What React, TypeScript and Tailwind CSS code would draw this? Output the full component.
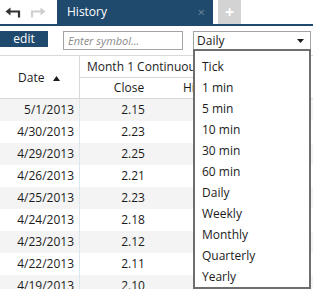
import React from "react";

const rows = [
    { date: "5/1/2013", close: "2.15" },
    { date: "4/30/2013", close: "2.23" },
    { date: "4/29/2013", close: "2.25" },
    { date: "4/26/2013", close: "2.21" },
    { date: "4/25/2013", close: "2.23" },
    { date: "4/24/2013", close: "2.18" },
    { date: "4/23/2013", close: "2.12" },
    { date: "4/22/2013", close: "2.11" },
    { date: "4/19/2013", close: "2.10" },
];

const intervals = [
    "Tick",
    "1 min",
    "5 min",
    "10 min",
    "30 min",
    "60 min",
    "Daily",
    "Weekly",
    "Monthly",
    "Quarterly",
    "Yearly",
];

const NavArrow = ({ flip, color }: { flip?: boolean; color: string }) => (
    <svg
        width="16"
        height="12"
        viewBox="0 0 16 12"
        className={flip ? "-scale-x-100" : ""}
    >
        <path
            d="M14 10.5 V4.5 H3"
            fill="none"
            stroke={color}
            strokeWidth="2.2"
        />
        <path d="M0.5 4.5 L5.5 0.5 V8.5 Z" fill={color} />
    </svg>
);

const App: React.FC = () => {
    return (
        <div
            className="relative w-[313px] h-[289px] overflow-hidden bg-white text-[12px] text-[#1b1b1b]"
            style={{ fontFamily: '"Open Sans", "Noto Sans", sans-serif' }}
        >
            {/* Tab strip */}
            <div className="flex h-[24px]">
                <div className="w-[57px] flex items-center gap-[9px] pl-[5px] pt-[1px]">
                    <NavArrow color="#333333" />
                    <NavArrow flip color="#cfcfcf" />
                </div>
                <div className="w-[156px] bg-[#1f4a6e] flex items-center justify-between pl-[10px] pr-[8px] text-white">
                    <span>History</span>
                    <span className="text-[#6f8599] text-[13px] leading-none">×</span>
                </div>
                <div className="ml-[5px] w-[23px] bg-[#d3d3d3] flex items-center justify-center text-white font-bold text-[16px] leading-none">
                    +
                </div>
            </div>
            <div className="h-[2px] bg-[#1f4a6e]" />

            {/* Toolbar */}
            <div className="flex items-start h-[29px] pt-[5px]">
                <button className="w-[48px] h-[16px] bg-[#1f4a6e] text-white leading-[16px] text-center">
                    edit
                </button>
                <div className="ml-[15px] w-[120px] h-[19px] border border-[#a3a3a3] pl-[4px] italic text-[#8a8a8a] text-[11px] leading-[17px]">
                    Enter symbol...
                </div>
                <div className="ml-[10px] w-[118px] h-[19px] border border-[#a3a3a3] flex items-center justify-between pl-[3px] pr-[6px]">
                    <span className="leading-none">Daily</span>
                    <svg width="7" height="4" viewBox="0 0 7 4">
                        <path d="M0 0 H7 L3.5 4 Z" fill="#1b1b1b" />
                    </svg>
                </div>
            </div>

            {/* Grid (right part sits under the open dropdown) */}
            <div className="border-t border-[#d9d9d9]">
                <div className="flex h-[43px] border-b border-[#d9d9d9]">
                    <div className="w-[80px] shrink-0 border-r border-[#d9d9d9] flex items-center pl-[18px] pt-[2px] gap-[9px]">
                        <span>Date</span>
                        <svg width="7" height="5" viewBox="0 0 7 5">
                            <path d="M0 5 H7 L3.5 0 Z" fill="#1b1b1b" />
                        </svg>
                    </div>
                    <div className="w-[113px] overflow-hidden flex flex-col">
                        <div className="h-[22px] border-b border-[#d9d9d9] flex items-center pl-[7px] whitespace-nowrap">
                            Month 1 Continuous
                        </div>
                        <div className="flex-1 flex items-center whitespace-nowrap">
                            <div className="w-[98px] shrink-0 text-center">Close</div>
                            <div className="pl-[5px]">High</div>
                        </div>
                    </div>
                </div>
                {rows.map((r, i) => (
                    <div
                        key={r.date}
                        className={`flex h-[22px] items-center ${i % 2 === 0 ? "bg-[#f4f4f4]" : "bg-white"}`}
                    >
                        <div className="w-[80px] shrink-0 h-full border-r border-[#dde5ed] flex items-center justify-end pr-[5px]">
                            {r.date}
                        </div>
                        <div className="w-[106px] text-center">{r.close}</div>
                    </div>
                ))}
            </div>

            {/* Interval dropdown list */}
            <div className="absolute left-[193px] top-[49px] w-[118px] h-[240px] bg-white border-2 border-[#6e6e6e] pt-[5px]">
                {intervals.map((item) => (
                    <div key={item} className="h-[21px] flex items-center pl-[7px]">
                        {item}
                    </div>
                ))}
            </div>
        </div>
    );
};

export default App;
